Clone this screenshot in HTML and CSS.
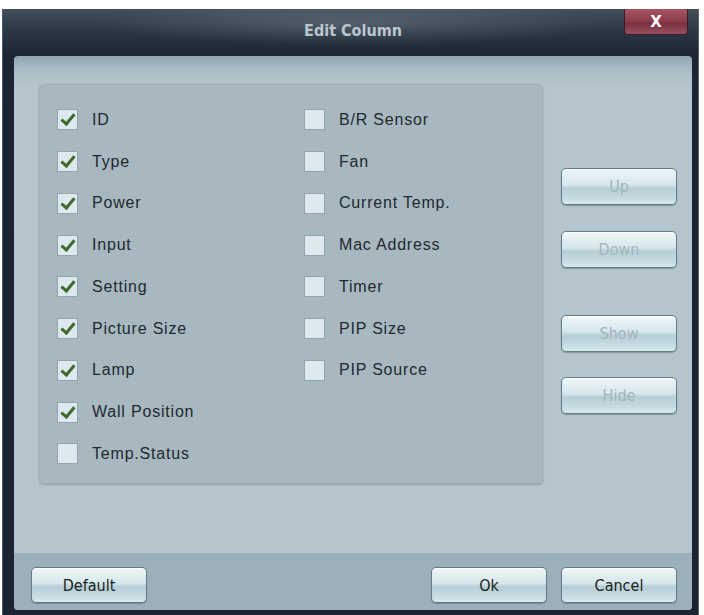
FILE: index.html
```html
<!DOCTYPE html>
<html lang="en">
<head>
    <meta charset="UTF-8">
    <title>Edit Column</title>
    <link rel="stylesheet" href="styles.css">
</head>
<body>
    <div class="window">
        <div class="titlebar">
            <span class="title">Edit Column</span>
            <button class="close-btn">X</button>
        </div>
        <div class="panel">
            <div class="content">
                <div class="group">
                    <ul class="col col-left">
                        <li class="item checked"><span class="box"></span>ID</li>
                        <li class="item checked"><span class="box"></span>Type</li>
                        <li class="item checked"><span class="box"></span>Power</li>
                        <li class="item checked"><span class="box"></span>Input</li>
                        <li class="item checked"><span class="box"></span>Setting</li>
                        <li class="item checked"><span class="box"></span>Picture Size</li>
                        <li class="item checked"><span class="box"></span>Lamp</li>
                        <li class="item checked"><span class="box"></span>Wall Position</li>
                        <li class="item"><span class="box"></span>Temp.Status</li>
                    </ul>
                    <ul class="col">
                        <li class="item"><span class="box"></span>B/R Sensor</li>
                        <li class="item"><span class="box"></span>Fan</li>
                        <li class="item"><span class="box"></span>Current Temp.</li>
                        <li class="item"><span class="box"></span>Mac Address</li>
                        <li class="item"><span class="box"></span>Timer</li>
                        <li class="item"><span class="box"></span>PIP Size</li>
                        <li class="item"><span class="box"></span>PIP Source</li>
                    </ul>
                </div>
                <div class="side-buttons">
                    <button class="btn disabled btn-up">Up</button>
                    <button class="btn disabled btn-down">Down</button>
                    <button class="btn disabled btn-show">Show</button>
                    <button class="btn disabled btn-hide">Hide</button>
                </div>
            </div>
            <div class="footer">
                <button class="btn">Default</button>
                <div class="footer-right">
                    <button class="btn">Ok</button>
                    <button class="btn">Cancel</button>
                </div>
            </div>
        </div>
    </div>
</body>
</html>
```

FILE: styles.css
```css
body {
    margin: 0;
    background: #ffffff;
    font-family: "Liberation Sans", Arial, sans-serif;
}

.window {
    margin: 9px 5px 0 2px;
    height: 606px;
    background: linear-gradient(to bottom, #44505c 0px, #2c3844 20px, #1b2632 46px, #1a2531 100%);
    border-left: 1px solid #4a5866;
    border-right: 1px solid #55636f;
    box-sizing: border-box;
    padding: 0 6px 5px 11px;
    display: flex;
    flex-direction: column;
}

.titlebar {
    height: 47px;
    display: flex;
    justify-content: center;
    align-items: center;
    position: relative;
    background: radial-gradient(ellipse 260px 22px at 50% 30%, rgba(140, 155, 168, 0.35), rgba(140, 155, 168, 0));
}

.title {
    font-family: "DejaVu Sans Condensed", "Liberation Sans", sans-serif;
    font-weight: bold;
    font-size: 16px;
    color: #bcc6ce;
    margin-top: -4px;
}

.close-btn {
    position: absolute;
    top: 0;
    right: 4px;
    width: 64px;
    height: 26px;
    border: 1px solid #3a1c24;
    border-top: none;
    border-radius: 0 0 4px 4px;
    background: linear-gradient(to bottom, #a45562 0%, #8c3c4a 50%, #7a2f3d 55%, #94505c 100%);
    color: #ffffff;
    font-family: "DejaVu Sans", sans-serif;
    font-weight: bold;
    font-size: 15px;
    padding: 0;
}

.panel {
    flex: 1;
    background: linear-gradient(to bottom, #8da2ad 0px, #a9bcc5 12px, #b4c5cd 30px, #b4c5cd 100%);
    border-radius: 4px;
    display: flex;
    flex-direction: column;
}

.content {
    flex: 1;
    display: flex;
    padding: 28px 15px 0 25px;
    gap: 18px;
}

.group {
    width: 504px;
    height: 400px;
    box-sizing: border-box;
    background: #a7b8c1;
    border: 1px solid #9eafb8;
    border-radius: 5px;
    box-shadow: 0 1px 2px rgba(80, 100, 110, 0.35);
    display: flex;
    padding: 14px 0 0 17px;
}

.col {
    list-style: none;
    margin: 0;
    padding: 0;
}

.col-left {
    width: 247px;
}

.item {
    height: 41.75px;
    display: flex;
    align-items: center;
    font-size: 16px;
    letter-spacing: 0.8px;
    color: #23282c;
}

.box {
    width: 19px;
    height: 19px;
    background: #dde8ef;
    border: 1px solid #93a4ad;
    margin-right: 14px;
    flex-shrink: 0;
    display: flex;
    align-items: center;
    justify-content: center;
}

.checked .box::before {
    content: "";
    width: 5px;
    height: 11px;
    border: solid #3e6a2b;
    border-width: 0 3px 3px 0;
    transform: rotate(40deg);
    margin-top: -3px;
}

.side-buttons {
    display: flex;
    flex-direction: column;
    padding-top: 84px;
}

.btn {
    width: 116px;
    height: 37px;
    border: 1px solid #5f7c88;
    border-radius: 5px;
    background: linear-gradient(to bottom, #eef6f8 0%, #d6e7ec 45%, #b7ced6 55%, #c7dce3 85%, #dbe9ee 100%);
    box-shadow: inset 0 1px 0 #ffffff, 0 1px 1px rgba(60, 80, 90, 0.4);
    font-family: "DejaVu Sans Condensed", "Liberation Sans", sans-serif;
    font-size: 16px;
    color: #1b1f22;
    padding: 0;
}

.btn.disabled {
    color: #a3b5bc;
}

.btn-down {
    margin-top: 26px;
}

.btn-show {
    margin-top: 47px;
}

.btn-hide {
    margin-top: 25px;
}

.footer {
    height: 57px;
    box-sizing: border-box;
    background: #9cb0ba;
    border-radius: 0 0 4px 4px;
    display: flex;
    justify-content: space-between;
    padding: 14px 15px 0 17px;
}

.footer .btn {
    height: 36px;
}

.footer-right {
    display: flex;
    gap: 14px;
}
```
